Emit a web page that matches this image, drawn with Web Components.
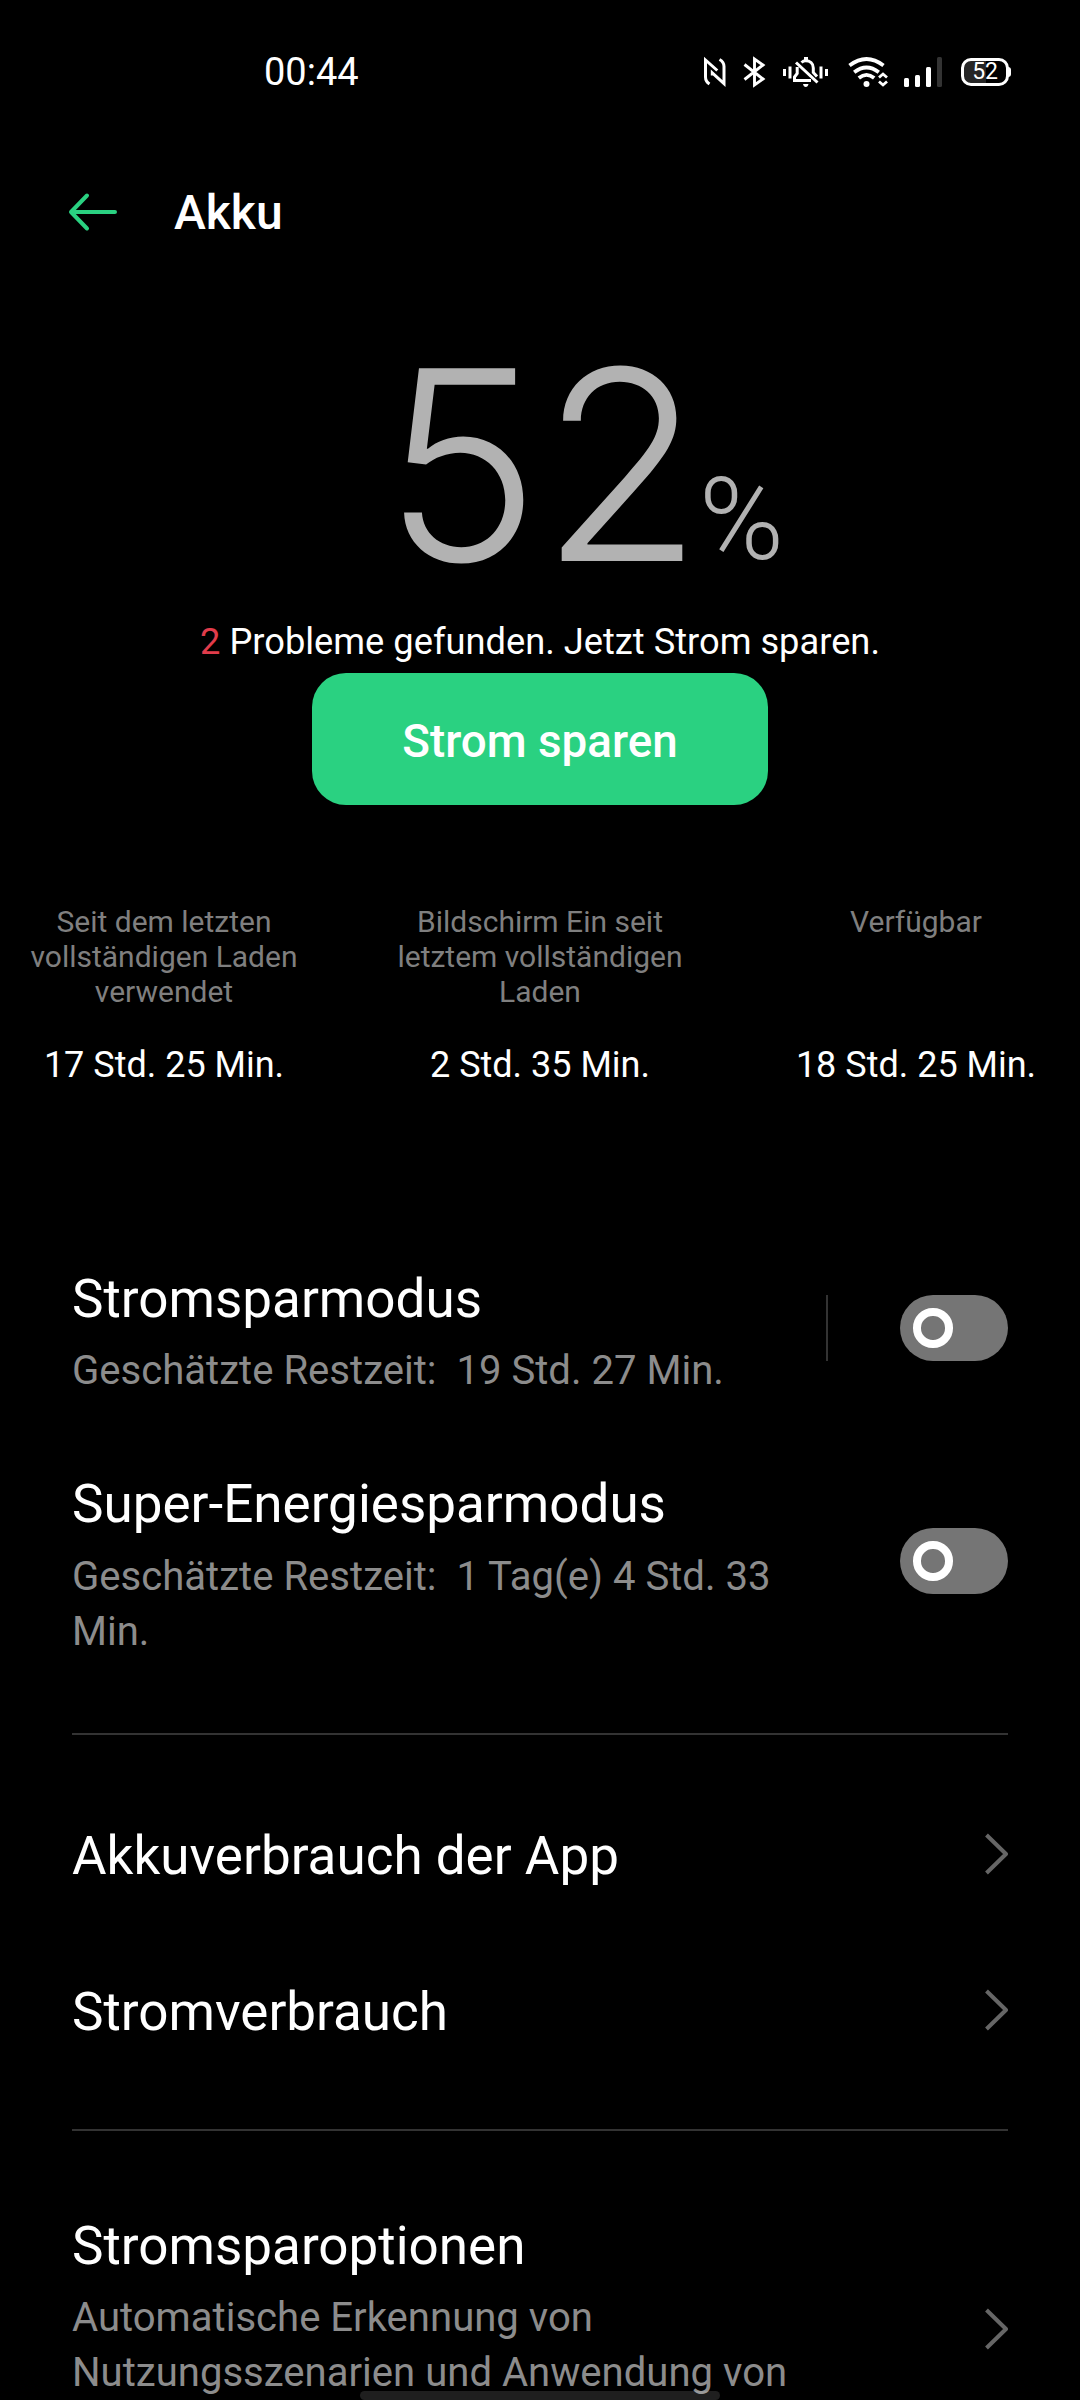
<!DOCTYPE html>
<html lang="de">
<head>
<meta charset="utf-8">
<title>Akku</title>
<style>
html,body{margin:0;background:#000}
body{width:1080px;height:2400px;overflow:hidden;font-family:Roboto,"Liberation Sans",sans-serif;color:#fff}
</style>
</head>
<body>
<battery-screen></battery-screen>
<script>
const define = (name, css, html) => customElements.define(name, class extends HTMLElement {
  constructor() {
    super();
    this.attachShadow({ mode: 'open' }).innerHTML = `<style>${css}</style>${html}`;
  }
});

define('status-icons', `
:host{display:flex;align-items:center;height:40px}
svg{display:block;fill:none;stroke:#fff;overflow:visible}
.nfc{margin-right:17px}.bt{margin-right:17px}.bell{margin-right:20px}.wifi{margin-right:16px}.sig{margin-right:19px}
.batt{display:flex;align-items:center}
.cell{box-sizing:border-box;width:48px;height:28px;border:3px solid #fff;border-radius:10px;background:linear-gradient(90deg,#262626 0 22px,#000 22px);font-size:23px;line-height:22px;text-align:center;letter-spacing:-.2px}
.nub{width:3px;height:10px;background:#fff;border-radius:0 3px 3px 0;margin-left:-1px}
`, `
<svg class="nfc" width="22" height="28" viewBox="0 0 22 28" stroke-width="3"><path d="M5.500 26C2.800 24.300 1.500 22 1.500 19V2L13.300 12.500M15.500 1.500C18.800 3.300 20 5.500 20 8.500V25.500L8.300 14.800V17.500"/></svg>
<svg class="bt" width="23" height="30" viewBox="0 0 23 30" stroke-width="2.900"><path d="M1.500 7.500 20 22 11.500 28V2L20 8 1.500 22.500"/></svg>
<svg class="bell" width="45" height="30" viewBox="0 0 45 30" stroke-width="3"><path d="M1.500 12V19M7 9.500V21.500M38 9.500V21.500M43.500 12V19"/><path d="M18.500 5.500C20 4.100 21.200 3.700 22.500 3.700C27 3.700 30.300 6.500 30.300 11V15.500L34 19.500M14.200 10V16.500L11.500 20V23.600H28M13 5.500 34.500 25.500" /><path fill="#fff" stroke="none" d="M21 0h4v3h-4zM20 27h5.500q-.6 3-2.750 3T20 27z"/></svg>
<svg class="wifi" width="40" height="30" viewBox="0 0 40 30" stroke-width="3.800"><path d="M1.500 8.500Q18.500-4.500 35.500 8.500M6.200 15.200Q18.500 5.800 30.800 15.200M10.800 21Q18.500 14.800 26.200 21"/><circle cx="18.500" cy="27" r="3" fill="#fff" stroke="none"/><path stroke-width="2.800" d="M31 20.500 35 17 39 20.500M31 24.500 35 28 39 24.500"/></svg>
<svg class="sig" width="38" height="30" viewBox="0 0 38 30" stroke="none"><g fill="#fff" stroke="none"><rect y="21" width="5" height="9" rx="1.500"/><rect x="11" y="18" width="5" height="12" rx="1.500"/><rect x="22" y="10" width="5" height="20" rx="1.500"/><rect x="33" width="5" height="30" rx="1.500" fill="#333"/></g></svg>
<div class="batt"><div class="cell">52</div><div class="nub"></div></div>`);

define('status-bar', `
:host{display:flex;align-items:center;justify-content:space-between;height:144px;box-sizing:border-box;padding:0 69px 0 264px}
.time{font-size:38px;line-height:44px}`,
`<span class="time">00:44</span><status-icons></status-icons>`);

define('title-bar', `
:host{display:flex;align-items:center;height:136px;padding-left:68px}
svg{display:block;width:50px;height:40px;margin-right:56px}
h1{margin:2px 0 0;font-size:48px;line-height:56px;font-weight:500}`,
`<svg viewBox="0 0 50 40" fill="none" stroke="#2ad181" stroke-width="4" stroke-linecap="round" stroke-linejoin="round"><path d="M47 20H3M19 3.500 3 20 19 36.500"/></svg><h1><slot></slot></h1>`);

define('charge-level', `
:host{display:block;margin-top:15px;padding-left:383px;height:332px;white-space:nowrap;color:#b2b2b2;font:300 265px/340px Inter,sans-serif}
.pct{font:300 115px/0 Roboto,sans-serif;vertical-align:2px;margin-left:-4px}`,
`<slot></slot><span class="pct">%</span>`);

define('issue-note', `
:host{display:block;text-align:center;font-size:36.250px;line-height:30px}
b{font-weight:400;color:#e13c4b}`,
`<b>2</b> <slot></slot>`);

define('primary-button', `
:host{display:flex;justify-content:center;margin-top:16px}
button{box-sizing:border-box;width:456px;height:132px;border:0;border-radius:34px;background:#2ad181;color:#fff;font:500 45.750px/52px Roboto,sans-serif;padding:5px 0 0}`,
`<button><slot></slot></button>`);

define('usage-stat', `
:host{display:flex;flex-direction:column;gap:35px;width:328px;text-align:center}
.label{height:105px;font-size:30px;line-height:35px;color:#7f7f7f}
.value{font-size:36px;line-height:42px}`,
`<div class="label"><slot></slot></div><div class="value"><slot name="value"></slot></div>`);

define('usage-stats', `:host{display:flex;justify-content:space-between;margin-top:99px}`, `<slot></slot>`);

define('toggle-switch', `
:host{display:block;box-sizing:border-box;width:108px;height:66px;border-radius:33px;background:#757575;padding:13px}
i{display:block;box-sizing:border-box;width:39.500px;height:39.500px;border:8px solid #fff;border-radius:50%}`, `<i></i>`);

define('chevron-icon', `:host{display:block;width:24px;height:42px}svg{display:block}`,
`<svg width="24" height="42" viewBox="0 0 24 42" fill="none" stroke="#666" stroke-width="4" stroke-linejoin="round"><path d="M2.500 2 22 21 2.500 40"/></svg>`);

define('setting-row', `
:host{display:flex;align-items:center;justify-content:space-between;padding:var(--pad,37px) 72px}
.text{width:730px}
.title{font-size:53px;line-height:64px}
.sub{font-size:40.100px;line-height:55px;color:#8c8c8c;white-space:pre-wrap}
::slotted([slot=sub]){display:block;margin-top:12.400px;min-height:var(--sub-min,0)}
.end{display:flex;align-items:center;margin-bottom:var(--lift,9px)}
:host([split]) .end::before{content:"";width:2px;height:66px;background:#333;margin-right:72px}`,
`<div class="text"><div class="title"><slot></slot></div><div class="sub"><slot name="sub"></slot></div></div><div class="end"><slot name="end"></slot></div>`);

define('section-rule', `:host{display:block;height:2px;background:#333;margin:37px 72px 0}`, ``);

define('gesture-bar', `:host{display:block;position:absolute;left:360px;top:2391px;width:360px;height:9px;border-radius:5px;background:rgba(255,255,255,.12)}`, ``);

define('battery-screen', `
:host{display:block;position:relative;width:1080px;height:2400px;overflow:hidden;background:#000}
.modes{padding-top:144px}
.usage{padding-top:43px;--pad:46px;--lift:3px}
.usage + section-rule{margin-top:39px}
.options{padding-top:46px;--sub-min:165px;--lift:11px}
`, `
<status-bar></status-bar>
<title-bar>Akku</title-bar>
<charge-level>52</charge-level>
<issue-note>Probleme gefunden. Jetzt Strom sparen.</issue-note>
<primary-button>Strom sparen</primary-button>
<usage-stats>
  <usage-stat>Seit dem letzten<br>vollständigen Laden<br>verwendet<span slot="value">17 Std. 25 Min.</span></usage-stat>
  <usage-stat>Bildschirm Ein seit<br>letztem vollständigen<br>Laden<span slot="value">2 Std. 35 Min.</span></usage-stat>
  <usage-stat>Verfügbar<span slot="value">18 Std. 25 Min.</span></usage-stat>
</usage-stats>
<div class="modes">
  <setting-row split>Stromsparmodus<span slot="sub">Geschätzte Restzeit:  19 Std. 27 Min.</span><toggle-switch slot="end"></toggle-switch></setting-row>
  <setting-row>Super-Energiesparmodus<span slot="sub">Geschätzte Restzeit:  1 Tag(e) 4 Std. 33 Min.</span><toggle-switch slot="end"></toggle-switch></setting-row>
</div>
<section-rule></section-rule>
<div class="usage">
  <setting-row>Akkuverbrauch der App<chevron-icon slot="end"></chevron-icon></setting-row>
  <setting-row>Stromverbrauch<chevron-icon slot="end"></chevron-icon></setting-row>
</div>
<section-rule></section-rule>
<div class="options">
  <setting-row>Stromsparoptionen<span slot="sub">Automatische Erkennung von
Nutzungsszenarien und Anwendung von</span><chevron-icon slot="end"></chevron-icon></setting-row>
</div>
<gesture-bar></gesture-bar>`);
</script>
</body>
</html>
